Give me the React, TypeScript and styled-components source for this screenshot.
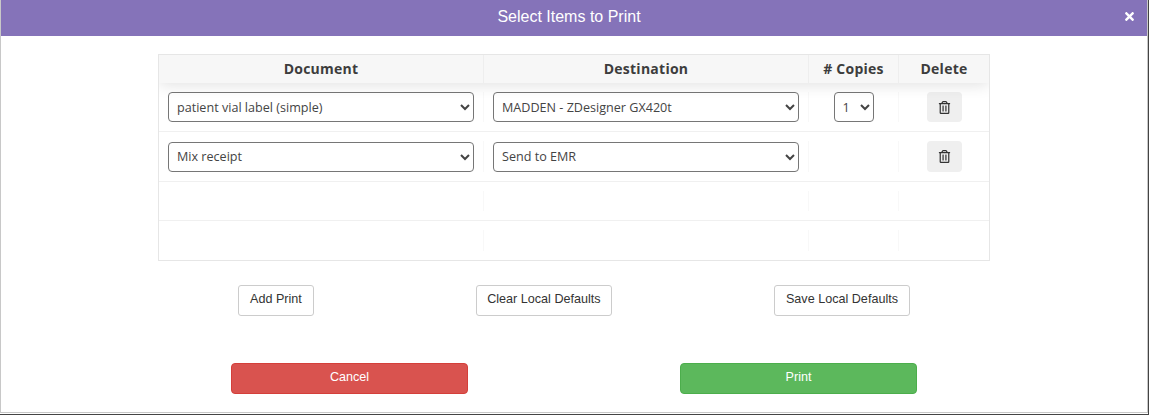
import React from "react";
import styled, { createGlobalStyle } from "styled-components";
import { FaRegTrashAlt, FaTimes } from "react-icons/fa";

const GlobalStyle = createGlobalStyle`
  html, body {
    margin: 0;
    padding: 0;
    background: #fff;
  }
`;

const Page = styled.div`
  width: 1150px;
  height: 416px;
  background: #fff;
`;

const Frame = styled.div`
  box-sizing: border-box;
  width: 1149px;
  height: 415px;
  border-right: 1px solid #444;
  border-bottom: 1px solid #444;
`;

const Modal = styled.div`
  box-sizing: border-box;
  height: 413px;
  background: #fff;
  border-left: 1px solid #c8c8c8;
  border-right: 1px solid #c8c8c8;
  border-bottom: 1px solid #c8c8c8;
  font-family: "Liberation Sans", Arial, sans-serif;
  overflow: hidden;
`;

const Header = styled.header`
  position: relative;
  height: 36px;
  background: #8573b9;
  color: #fff;
  font-size: 16px;
  line-height: 33px;
  text-align: center;
  padding-right: 10px;
`;

const CloseButton = styled.span`
  position: absolute;
  right: 11px;
  top: 10px;
  display: flex;
  color: #fff;
  font-size: 13px;
`;

const Body = styled.main`
  padding: 18px 157px 0;
`;

const Table = styled.div`
  box-sizing: border-box;
  width: 832px;
  height: 207px;
  border: 1px solid #e6e6e6;
  font-family: "Open Sans", sans-serif;
  font-size: 12.6px;
  color: #333;
  overflow: hidden;
`;

const HeadRow = styled.div`
  position: relative;
  display: grid;
  grid-template-columns: 325px 325px 90px 90px;
  height: 28px;
  background: #f7f7f7;
  box-shadow: 0 2px 15px 0 rgba(0, 0, 0, 0.12);
`;

const HeadCell = styled.div`
  border-right: 1px solid #eeeeee;
  font-size: 14px;
  font-weight: 700;
  letter-spacing: 0.25px;
  line-height: 27px;
  text-align: center;
  color: #3d3d3d;

  &:last-child {
    border-right: none;
  }
`;

const Row = styled.div<{ $height: number }>`
  box-sizing: border-box;
  display: grid;
  grid-template-columns: 325px 325px 90px 90px;
  height: ${(p) => p.$height}px;
  padding: 9px 0;
  border-bottom: 1px solid #f0f0f0;

  &:last-child {
    border-bottom: none;
  }
`;

const Cell = styled.div<{ $center?: boolean }>`
  box-sizing: border-box;
  display: flex;
  align-items: center;
  justify-content: ${(p) => (p.$center ? "center" : "stretch")};
  padding: 0 9px;
  border-right: 1px solid #f8f8f8;

  &:last-child {
    border-right: none;
  }
`;

const Select = styled.select<{ $small?: boolean }>`
  box-sizing: border-box;
  width: ${(p) => (p.$small ? "40px" : "100%")};
  height: 30px;
  padding: 0 4px;
  background: #fff;
  border: 1px solid #767676;
  border-radius: 4px;
  font-family: "Open Sans", sans-serif;
  font-size: 12.6px;
  color: #444;
`;

const TrashButton = styled.button`
  display: flex;
  align-items: center;
  justify-content: center;
  width: 35px;
  height: 100%;
  padding: 0;
  background: #efefef;
  border: none;
  border-radius: 4px;
  color: #333;
  font-size: 13px;
`;

const ToolRow = styled.div`
  display: flex;
  justify-content: center;
  gap: 162px;
  margin-top: 24px;
`;

const ToolButton = styled.button`
  box-sizing: border-box;
  height: 31px;
  padding: 0 10.7px 4px;
  background: #fff;
  border: 1px solid #ccc;
  border-radius: 3px;
  font-family: "Liberation Sans", Arial, sans-serif;
  font-size: 12.6px;
  color: #333;
`;

const ActionRow = styled.div`
  display: flex;
  justify-content: center;
  gap: 212px;
  margin-top: 47px;
`;

const ActionButton = styled.button<{ $bg: string; $edge: string }>`
  box-sizing: border-box;
  width: 237px;
  height: 31px;
  padding: 0 0 4px;
  background: ${(p) => p.$bg};
  border: 1px solid ${(p) => p.$edge};
  border-radius: 4px;
  font-family: "Liberation Sans", Arial, sans-serif;
  font-size: 12.6px;
  color: #fff;
`;

const rows = [
  { doc: "patient vial label (simple)", dest: "MADDEN - ZDesigner GX420t", copies: true },
  { doc: "Mix receipt", dest: "Send to EMR", copies: false },
];

export default function App() {
  return (
    <Page>
      <GlobalStyle />
      <Frame>
        <Modal>
          <Header>
            Select Items to Print
            <CloseButton>
              <FaTimes />
            </CloseButton>
          </Header>
          <Body>
            <Table>
              <HeadRow>
                <HeadCell>Document</HeadCell>
                <HeadCell>Destination</HeadCell>
                <HeadCell># Copies</HeadCell>
                <HeadCell>Delete</HeadCell>
              </HeadRow>
              {rows.map((r, i) => (
                <Row key={r.doc} $height={i === 0 ? 49 : 50}>
                  <Cell>
                    <Select defaultValue={r.doc}>
                      <option>{r.doc}</option>
                    </Select>
                  </Cell>
                  <Cell>
                    <Select defaultValue={r.dest}>
                      <option>{r.dest}</option>
                    </Select>
                  </Cell>
                  <Cell $center>
                    {r.copies && (
                      <Select $small defaultValue="1">
                        <option>1</option>
                      </Select>
                    )}
                  </Cell>
                  <Cell $center>
                    <TrashButton>
                      <FaRegTrashAlt />
                    </TrashButton>
                  </Cell>
                </Row>
              ))}
              <Row $height={39}>
                <Cell />
                <Cell />
                <Cell />
                <Cell />
              </Row>
              <Row $height={39}>
                <Cell />
                <Cell />
                <Cell />
                <Cell />
              </Row>
            </Table>
            <ToolRow>
              <ToolButton>Add Print</ToolButton>
              <ToolButton>Clear Local Defaults</ToolButton>
              <ToolButton>Save Local Defaults</ToolButton>
            </ToolRow>
            <ActionRow>
              <ActionButton $bg="#d9534f" $edge="#d43f3a">Cancel</ActionButton>
              <ActionButton $bg="#5cb85c" $edge="#4cae4c">Print</ActionButton>
            </ActionRow>
          </Body>
        </Modal>
      </Frame>
    </Page>
  );
}
